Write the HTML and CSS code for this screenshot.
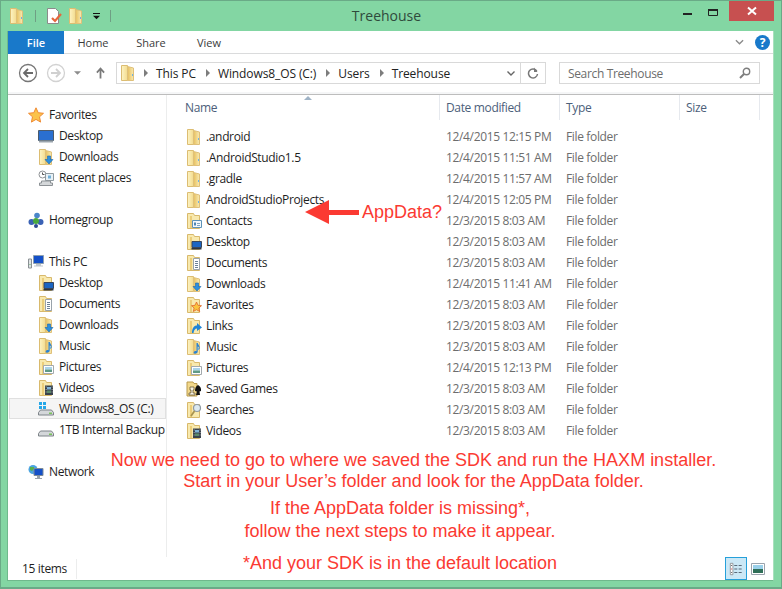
FILE: index.html
```html
<!DOCTYPE html>
<html lang="en">
<head>
    <meta charset="UTF-8">
    <title>Treehouse</title>
    <link rel="stylesheet" href="styles.css">
</head>
<body>
<svg class="defs" width="0" height="0">
    <defs>
        <linearGradient id="fback" x1="0" x2="1" y1="0" y2="0"><stop offset="0" stop-color="#fdf3c4"/><stop offset="1" stop-color="#f3dc8e"/></linearGradient>
        <linearGradient id="ffront" x1="0" x2="1" y1="0" y2="0"><stop offset="0" stop-color="#e6bf5e"/><stop offset="1" stop-color="#f9ebb4"/></linearGradient>
        <symbol id="folder" viewBox="0 0 16 16">
            <path d="M1.500.5h6v15h-6z" fill="url(#fback)" stroke="#dcbd72"/>
            <path d="M7.500 1.500l6 1.500v12.500h-6z" fill="url(#ffront)" stroke="#dfc07a"/>
            <path d="M12 9h1v2h-1z" fill="#6fb4e4"/>
        </symbol>
        <symbol id="folder2" viewBox="0 0 16 16">
            <path d="M1.500.5h6l1 2h5v13h-12z" fill="#f8e9ae" stroke="#d8b96c"/>
            <path d="M4 3h2v12H4z" fill="#ebcd7a"/>
        </symbol>
        <symbol id="contacts" viewBox="0 0 16 16">
            <use href="#folder2" width="16" height="16"/>
            <path d="M6.500 7.500h9v7h-9z" fill="#f2f7fb" stroke="#5d93b8"/>
            <path d="M8 9.500h2v3H8z" fill="#4d86b3"/><path d="M11 10h3v1h-3zM11 12h3v1h-3z" fill="#7fa5c0"/>
        </symbol>
        <symbol id="desktop" viewBox="0 0 16 16">
            <use href="#folder2" width="16" height="16"/>
            <path d="M6 7.500h9.500v6H6z" fill="#1b65c2" stroke="#39465a"/>
            <path d="M5.500 14h10v1.500h-10z" fill="#2d3540"/>
        </symbol>
        <symbol id="documents" viewBox="0 0 16 16">
            <use href="#folder2" width="16" height="16"/>
            <path d="M7.500 3.500h6v11h-6z" fill="#fff" stroke="#9aa3ab"/>
            <path d="M9 6h3v1H9zM9 8h3v1H9zM9 10h3v1H9zM9 12h3v1H9z" fill="#6d8296"/>
        </symbol>
        <symbol id="downloads" viewBox="0 0 16 16">
            <use href="#folder" width="16" height="16"/>
            <path d="M9.500 7h3v3.500H15L11 15 7 10.500h2.500z" fill="#2d8fdd" stroke="#1867ad" stroke-width=".6"/>
        </symbol>
        <symbol id="favorites" viewBox="0 0 16 16">
            <use href="#folder2" width="16" height="16"/>
            <path d="M10.500 5l1.500 3.300 3.500.4-2.600 2.300.8 3.500-3.200-1.800-3.200 1.800.8-3.500-2.600-2.300 3.500-.4z" fill="#f9c43f" stroke="#e0662c" stroke-width=".8"/>
        </symbol>
        <symbol id="links" viewBox="0 0 16 16">
            <use href="#folder2" width="16" height="16"/>
            <path d="M6 15c0-5 2-7.500 5-7.500V5l5 4.500-5 3.500v-2.500c-2 0-3 1.500-3.500 4.500z" fill="#1f85d6"/>
        </symbol>
        <symbol id="music" viewBox="0 0 16 16">
            <use href="#folder" width="16" height="16"/>
            <path d="M10.500 4h1.300c.3 2 2.700 3 1.700 6h-.5c.2-1.400-.5-2.300-1.300-2.600v5.100c0 1.400-1.300 2.200-2.600 2.200-1.500 0-2-1.600-.8-2.300.7-.4 1.500-.4 2.200-.2z" fill="#2b83d2"/>
        </symbol>
        <symbol id="pictures" viewBox="0 0 16 16">
            <use href="#folder2" width="16" height="16"/>
            <path d="M5.500 6.500h10v8h-10z" fill="#fff" stroke="#a3a9ad"/>
            <path d="M7 8h7v2.500H7z" fill="#a9d4ea"/><path d="M7 10.500h7V13H7z" fill="#5f9a86"/>
        </symbol>
        <symbol id="games" viewBox="0 0 16 16">
            <path d="M1 1h6l1 1.500h3V15H1z" fill="#f2d88b" stroke="#b99a4d"/>
            <path d="M4 6h4v3H7v3h2v2H3v-2h2V9H4z" fill="#f7f2df" stroke="#56492a" stroke-width=".7"/>
            <path d="M12 4c2 1 3.500 3 3 6l-1.500.5.500 3.500h-4l1-3.500-2-.5c0-3 1-5 3-6z" fill="#111"/>
        </symbol>
        <symbol id="searches" viewBox="0 0 16 16">
            <use href="#folder2" width="16" height="16"/>
            <circle cx="11" cy="6" r="3.500" fill="#dce9f0" stroke="#8f9aa2" stroke-width="1.200"/>
            <path d="M8.500 9L5 14" stroke="#a8934f" stroke-width="1.800"/>
        </symbol>
        <symbol id="videos" viewBox="0 0 16 16">
            <use href="#folder2" width="16" height="16"/>
            <path d="M7 5.500h8v9.500H7z" fill="#39424c"/>
            <path d="M9 7h4v2.500H9z" fill="#7fb2d6"/><path d="M9 10.500h4V13H9z" fill="#5b8a6a"/>
            <path d="M7.800 6.500h.6v1h-.6zM7.800 9h.6v1h-.6zM7.800 11.500h.6v1h-.6zM13.800 6.500h.6v1h-.6zM13.800 9h.6v1h-.6zM13.800 11.500h.6v1h-.6z" fill="#eee"/>
        </symbol>
        <symbol id="drive" viewBox="0 0 16 16">
            <path d="M2.500 9h11l2 2.500v2.500H.5v-2.500z" fill="#d4d7da" stroke="#7d8388"/>
            <path d="M11 11.500h3v1.500h-3z" fill="#79c35a"/>
        </symbol>
    </defs>
</svg>

<div class="window">
    <header class="titlebar">
        <div class="quick-access">
            <svg class="icon"><use href="#folder"/></svg>
            <span class="qa-sep"></span>
            <svg class="icon" viewBox="0 0 16 16"><path d="M1.500.5h8l3 3v12h-11z" fill="#fff" stroke="#8b8b8b"/><path d="M6 10l3 3 6-7" fill="none" stroke="#e5673c" stroke-width="2.200"/></svg>
            <svg class="icon"><use href="#folder"/></svg>
            <svg class="qa-more" viewBox="0 0 8 8"><path d="M0 0h8v1H0zM0 3h8L4 7z" fill="#111"/></svg>
            <span class="qa-sep"></span>
        </div>
        <div class="title">Treehouse</div>
        <div class="window-controls">
            <svg class="ctl" viewBox="0 0 27 21"><path d="M8 12h9v2H8z" fill="#222"/></svg>
            <svg class="ctl" viewBox="0 0 27 21"><path d="M6.500 8.500h9v6h-9z" fill="none" stroke="#222"/><path d="M6 8h10v2H6z" fill="#222"/></svg>
            <button class="close-btn"><svg viewBox="0 0 10 10"><path d="M1 1.500l8 7M9 1.500l-8 7" stroke="#fff" stroke-width="2"/></svg></button>
        </div>
    </header>

    <div class="pane">
        <nav class="ribbon">
            <a class="tab tab-file">File</a>
            <a class="tab">Home</a>
            <a class="tab">Share</a>
            <a class="tab">View</a>
            <svg class="ribbon-chevron" viewBox="0 0 10 6"><path d="M1 1l4 4 4-4" fill="none" stroke="#8a8a8a" stroke-width="1.500"/></svg>
            <span class="help">?</span>
        </nav>

        <div class="addressbar">
            <div class="nav-btns">
                <svg class="nav-round" viewBox="0 0 20 20"><circle cx="10" cy="10" r="8.500" fill="#fff" stroke="#767676" stroke-width="1.300"/><path d="M15 10H6M10 6l-4 4 4 4" fill="none" stroke="#6a6a6a" stroke-width="1.800"/></svg>
                <svg class="nav-round" viewBox="0 0 20 20"><circle cx="10" cy="10" r="8.500" fill="#fff" stroke="#d2d2d2" stroke-width="1.300"/><path d="M5 10h9M10 6l4 4-4 4" fill="none" stroke="#d0d0d0" stroke-width="1.800"/></svg>
                <svg class="nav-caret" viewBox="0 0 8 4"><path d="M0 0h8L4 4z" fill="#8c8c8c"/></svg>
                <svg class="nav-up" viewBox="0 0 10 12"><path d="M5 12V2M1 5.500L5 1l4 4.500" fill="none" stroke="#7a7a7a" stroke-width="2"/></svg>
            </div>
            <div class="crumbs">
                <svg class="icon crumb-icon"><use href="#folder"/></svg>
                <span class="crumb">This PC</span>
                <span class="crumb">Windows8_OS (C:)</span>
                <span class="crumb">Users</span>
                <span class="crumb">Treehouse</span>
                <span class="crumb-drop"><svg viewBox="0 0 8 5"><path d="M.5.500L4 4 7.500.5" fill="none" stroke="#666" stroke-width="1.400"/></svg></span>
                <span class="crumb-refresh"><svg viewBox="0 0 12 12"><path d="M9.800 4A4.500 4.500 0 1 0 10.500 7" fill="none" stroke="#777" stroke-width="1.500"/><path d="M7 .5V5h3.500z" fill="#777"/></svg></span>
            </div>
            <div class="searchbox">
                <span>Search Treehouse</span>
                <svg viewBox="0 0 12 12"><circle cx="7.500" cy="4.500" r="3.200" fill="none" stroke="#7d7d7d" stroke-width="1.400"/><path d="M5 7l-4 4" stroke="#7d7d7d" stroke-width="2"/></svg>
            </div>
        </div>
        <div class="strip"></div>

        <div class="main">
            <aside class="sidebar">
                <ul class="tree">
                    <li class="root"><svg class="icon" viewBox="0 0 16 16"><path d="M8 .8l2.200 4.900 5.300.6-4 3.500 1.100 5.300L8 12.400l-4.600 2.700 1.100-5.300-4-3.500 5.300-.6z" fill="#fbc34a" stroke="#ef8a33"/></svg>Favorites</li>
                    <li><svg class="icon" viewBox="0 0 16 16"><path d="M.5 2.500h15v10H.5z" fill="#2a6fd0" stroke="#4b5a6b"/><path d="M1 12.500h14v2H1z" fill="#9aa4ad"/></svg>Desktop</li>
                    <li><svg class="icon"><use href="#downloads"/></svg>Downloads</li>
                    <li><svg class="icon" viewBox="0 0 16 16"><circle cx="4.500" cy="4.500" r="3.500" fill="#fff" stroke="#8f9396"/><path d="M4.500 2.500v2h2" fill="none" stroke="#555"/><path d="M7.500 3.500h8v7h-8z" fill="#e8f1f6" stroke="#8f9aa0"/><path d="M10 5.500h3v3h-3z" fill="#73b0d8"/><path d="M3.500 11h9v2h2v2.500h-13V13h2z" fill="#d5d8da" stroke="#8d9296"/></svg>Recent places</li>
                    <li class="root gap"><svg class="icon" viewBox="0 0 16 16"><circle cx="3.500" cy="10" r="3" fill="#3a62b5"/><circle cx="12.500" cy="10" r="3" fill="#3a62b5"/><circle cx="9" cy="3.500" r="2.800" fill="#4a86c9"/><circle cx="8" cy="9" r="3" fill="#48a83e"/><circle cx="8" cy="14" r="2" fill="#2e4a94"/></svg>Homegroup</li>
                    <li class="root gap"><svg class="icon" viewBox="0 0 16 16"><path d="M5.500 1.500h10v8h-10z" fill="#1450c8" stroke="#8ea0b0"/><path d="M8 10h5v1.500h2v1H6v-1h2z" fill="#bfc6cc"/><path d="M.5 5h3v9h-3z" fill="#dfe3e5" stroke="#8a9094"/><path d="M1.500 10h1v1h-1z" fill="#5cb85c"/></svg>This PC</li>
                    <li><svg class="icon"><use href="#desktop"/></svg>Desktop</li>
                    <li><svg class="icon"><use href="#documents"/></svg>Documents</li>
                    <li><svg class="icon"><use href="#downloads"/></svg>Downloads</li>
                    <li><svg class="icon"><use href="#music"/></svg>Music</li>
                    <li><svg class="icon"><use href="#pictures"/></svg>Pictures</li>
                    <li><svg class="icon"><use href="#videos"/></svg>Videos</li>
                    <li class="selected"><svg class="icon" viewBox="0 0 16 16"><use href="#drive" width="16" height="16"/><path d="M1 1h3v3H1zM5 1h3v3H5zM1 5h3v3H1zM5 5h3v3H5z" fill="#25a7e8"/></svg>Windows8_OS (C:)</li>
                    <li><svg class="icon"><use href="#drive"/></svg>1TB Internal Backup</li>
                    <li class="root gap"><svg class="icon" viewBox="0 0 16 16"><circle cx="5" cy="5.500" r="4.500" fill="#4aa4e0"/><path d="M2 3h4v2l-2 2-2-1z" fill="#57b04a"/><path d="M6 4.500h9v7H6z" fill="#1450c8" stroke="#7d8b98"/><path d="M9 12h3v2h2v1H7v-1h2z" fill="#98a2aa"/></svg>Network</li>
                </ul>
            </aside>

            <section class="files">
                <div class="file-head">
                    <span class="col col-name">Name</span>
                    <span class="col">Date modified</span>
                    <span class="col">Type</span>
                    <span class="col col-size">Size</span>
                    <svg class="sort-caret" viewBox="0 0 8 4"><path d="M0 4l4-4 4 4z" fill="#9fb3c6"/></svg>
                </div>
                <div class="file-row"><span class="name"><svg class="icon"><use href="#folder"/></svg>.android</span><span class="meta">12/4/2015 12:15 PM</span><span class="meta">File folder</span></div>
                <div class="file-row"><span class="name"><svg class="icon"><use href="#folder"/></svg>.AndroidStudio1.5</span><span class="meta">12/4/2015 11:51 AM</span><span class="meta">File folder</span></div>
                <div class="file-row"><span class="name"><svg class="icon"><use href="#folder"/></svg>.gradle</span><span class="meta">12/4/2015 11:57 AM</span><span class="meta">File folder</span></div>
                <div class="file-row"><span class="name"><svg class="icon"><use href="#folder"/></svg>AndroidStudioProjects</span><span class="meta">12/4/2015 12:05 PM</span><span class="meta">File folder</span></div>
                <div class="file-row"><span class="name"><svg class="icon"><use href="#contacts"/></svg>Contacts</span><span class="meta">12/3/2015 8:03 AM</span><span class="meta">File folder</span></div>
                <div class="file-row"><span class="name"><svg class="icon"><use href="#desktop"/></svg>Desktop</span><span class="meta">12/3/2015 8:03 AM</span><span class="meta">File folder</span></div>
                <div class="file-row"><span class="name"><svg class="icon"><use href="#documents"/></svg>Documents</span><span class="meta">12/3/2015 8:03 AM</span><span class="meta">File folder</span></div>
                <div class="file-row"><span class="name"><svg class="icon"><use href="#downloads"/></svg>Downloads</span><span class="meta">12/4/2015 11:41 AM</span><span class="meta">File folder</span></div>
                <div class="file-row"><span class="name"><svg class="icon"><use href="#favorites"/></svg>Favorites</span><span class="meta">12/3/2015 8:03 AM</span><span class="meta">File folder</span></div>
                <div class="file-row"><span class="name"><svg class="icon"><use href="#links"/></svg>Links</span><span class="meta">12/3/2015 8:03 AM</span><span class="meta">File folder</span></div>
                <div class="file-row"><span class="name"><svg class="icon"><use href="#music"/></svg>Music</span><span class="meta">12/3/2015 8:03 AM</span><span class="meta">File folder</span></div>
                <div class="file-row"><span class="name"><svg class="icon"><use href="#pictures"/></svg>Pictures</span><span class="meta">12/4/2015 12:13 PM</span><span class="meta">File folder</span></div>
                <div class="file-row"><span class="name"><svg class="icon"><use href="#games"/></svg>Saved Games</span><span class="meta">12/3/2015 8:03 AM</span><span class="meta">File folder</span></div>
                <div class="file-row"><span class="name"><svg class="icon"><use href="#searches"/></svg>Searches</span><span class="meta">12/3/2015 8:03 AM</span><span class="meta">File folder</span></div>
                <div class="file-row"><span class="name"><svg class="icon"><use href="#videos"/></svg>Videos</span><span class="meta">12/3/2015 8:03 AM</span><span class="meta">File folder</span></div>
            </section>
        </div>

        <footer class="statusbar">
            <span class="count">15 items</span>
            <span class="view-btn active"><svg viewBox="0 0 16 16"><path d="M1.500 1.500h3v13h-3z" fill="#fff" stroke="#8b8f93"/><path d="M2.500 7.500h1v1h-1z" fill="#d33"/><path d="M2.500 3.500h1v1h-1zM2.500 11.500h1v1h-1z" fill="#555"/><path d="M6 3.500h3.500v1H6zM11 3.500h3.500v1H11zM6 7.500h3.500v1H6zM11 7.500h3.500v1H11zM6 11.500h3.500v1H6zM11 11.500h3.500v1H11z" fill="#5a6b7a"/></svg></span>
            <span class="view-btn"><svg viewBox="0 0 14 12"><path d="M.5.500h13v11H.5z" fill="#fff" stroke="#9aa3ad"/><path d="M2 2h10v4H2z" fill="#9ad0ea"/><path d="M2 6h10v4H2z" fill="#2f6f58"/></svg></span>
        </footer>
    </div>

    <div class="note-arrow">
        <svg viewBox="0 0 54 26"><path d="M0 13L24 1v10h30v5H24v9z" fill="#fb3a32"/></svg>
        <span>AppData?</span>
    </div>
    <div class="note">
        <p>Now we need to go to where we saved the SDK and run the HAXM installer.<br>Start in your User’s folder and look for the AppData folder.</p>
        <p class="note-mid">If the AppData folder is missing*,<br>follow the next steps to make it appear.</p>
        <p class="note-last">*And your SDK is in the default location</p>
    </div>
</div>
</body>
</html>
```

FILE: styles.css
```css
* {
    box-sizing: border-box;
}

body {
    margin: 0;
    font-family: "Open Sans", "Noto Sans", sans-serif;
    font-size: 12px;
    letter-spacing: -.35px;
    color: #1e1e1e;
}

.defs {
    position: absolute;
}

.icon {
    width: 16px;
    height: 16px;
    flex: none;
}

.window {
    position: relative;
    width: 782px;
    height: 589px;
    display: flex;
    flex-direction: column;
    background-color: #83d6a3;
    border: 1px solid #6aaa87;
    border-bottom-width: 2px;
}

/* title bar */
.titlebar {
    height: 30px;
    flex: none;
    display: grid;
    grid-template-columns: 1fr auto 1fr;
    padding-right: 7px;
}

.quick-access {
    display: flex;
    align-items: center;
    height: 30px;
    padding-left: 8px;
}

.qa-sep {
    width: 1px;
    height: 12px;
    margin: 0 10px;
    background-color: #6f9f84;
}

.quick-access .icon + .icon {
    margin-left: 6px;
}

.qa-more {
    width: 7px;
    height: 7px;
    margin-left: 9px;
}

.title {
    font-size: 14px;
    letter-spacing: 0;
    line-height: 30px;
    color: #2f4a3c;
    margin-right: 2px;
}

.window-controls {
    display: flex;
    justify-content: flex-end;
    align-items: flex-start;
}

.ctl {
    width: 27px;
    height: 21px;
}

.close-btn {
    width: 45px;
    height: 20px;
    padding: 0;
    border: none;
    background-color: #c75050;
    display: flex;
    align-items: center;
    justify-content: center;
}

.close-btn svg {
    width: 10px;
    height: 10px;
}

/* white pane */
.pane {
    flex: 1;
    margin: 0 7px 6px 6px;
    background-color: #fff;
    border: 1px solid #6fb98c;
    border-top: none;
    border-right-color: #a9e0bd;
    display: flex;
    flex-direction: column;
}

.ribbon {
    height: 23px;
    flex: none;
    display: flex;
    align-items: center;
    border-bottom: 1px solid #dadbdc;
}

.tab {
    width: 58px;
    text-align: center;
    color: #3b3b3b;
    font-size: 11px;
    letter-spacing: 0;
}

.tab-file {
    width: 56px;
    height: 23px;
    line-height: 23px;
    background-color: #1979ca;
    color: #fff;
    font-weight: 600;
}

.ribbon-chevron {
    width: 9px;
    height: 6px;
    margin-left: auto;
    margin-right: 11px;
}

.help {
    width: 15px;
    height: 15px;
    margin-right: 3px;
    border-radius: 50%;
    background-color: #1979ca;
    color: #fff;
    font-size: 12px;
    font-weight: 700;
    line-height: 15px;
    text-align: center;
}

/* address row */
.addressbar {
    height: 38px;
    flex: none;
    display: flex;
    align-items: center;
    padding-left: 10px;
}

.nav-btns {
    width: 98px;
    flex: none;
    display: flex;
    align-items: center;
}

.nav-round {
    width: 20px;
    height: 20px;
    margin-right: 8px;
}

.nav-caret {
    width: 7px;
    height: 4px;
}

.nav-up {
    width: 9px;
    height: 12px;
    margin-left: 15px;
}

.crumbs {
    width: 430px;
    height: 22px;
    flex: none;
    display: flex;
    align-items: center;
    border: 1px solid #d9d9d9;
    padding-left: 3px;
    color: #222;
    letter-spacing: -.1px;
}

.crumb-icon {
    margin-right: 8px;
}

.crumb {
    display: flex;
    align-items: center;
    margin-right: 10px;
}

.crumb::before {
    content: "";
    margin-right: 8px;
    border-left: 4px solid #7d7d7d;
    border-top: 4px solid transparent;
    border-bottom: 4px solid transparent;
}

.crumb-drop {
    margin-left: auto;
    width: 18px;
    text-align: center;
    line-height: 0;
}

.crumb-drop svg {
    width: 8px;
    height: 5px;
}

.crumb-refresh {
    width: 25px;
    height: 20px;
    border-left: 1px solid #d9d9d9;
    display: flex;
    align-items: center;
    justify-content: center;
}

.crumb-refresh svg {
    width: 12px;
    height: 12px;
}

.searchbox {
    width: 201px;
    height: 22px;
    flex: none;
    margin-left: 13px;
    padding: 0 8px;
    display: flex;
    align-items: center;
    justify-content: space-between;
    border: 1px solid #d9d9d9;
    color: #6d6d6d;
}

.searchbox svg {
    width: 12px;
    height: 12px;
}

.strip {
    height: 3px;
    flex: none;
    background-color: #f5f6f7;
    border-bottom: 1px solid #bdbdbd;
}

/* sidebar and list */
.main {
    flex: 1;
    display: flex;
    min-height: 0;
}

.sidebar {
    width: 159px;
    flex: none;
    padding-top: 9px;
    border-right: 1px solid #eceded;
}

.tree {
    list-style: none;
    margin: 0;
    padding: 0;
}

.tree li {
    height: 21px;
    display: flex;
    align-items: center;
    gap: 5px;
    padding-left: 30px;
    white-space: nowrap;
}

.tree li.root {
    padding-left: 20px;
}

.tree li.gap {
    margin-top: 21px;
}

.tree li.selected {
    margin-left: 1px;
    padding-left: 28px;
    background-color: #f5f5f5;
    border: 1px solid #e0e0e0;
}

.files {
    flex: 1;
}

.file-head {
    position: relative;
    height: 31px;
    display: grid;
    grid-template-columns: 273px 120px 120px 80px;
    color: #4c607a;
}

.col {
    height: 25px;
    padding: 4px 0 0 6px;
    border-right: 1px solid #e6e9ee;
}

.col-name {
    padding-left: 18px;
}

.sort-caret {
    position: absolute;
    left: 137px;
    top: 1px;
    width: 8px;
    height: 4px;
}

.file-row {
    height: 21px;
    display: grid;
    grid-template-columns: 273px 120px 120px;
    align-items: center;
}

.name {
    display: flex;
    align-items: center;
    gap: 4px;
    padding-left: 19px;
}

.meta {
    padding-left: 6px;
    color: #6d6d6d;
}

/* status bar */
.statusbar {
    height: 23px;
    flex: none;
    display: flex;
    align-items: center;
    padding-left: 14px;
    padding-right: 4px;
}

.count {
    width: 55px;
    height: 20px;
    line-height: 20px;
    border-right: 1px solid #eceded;
    margin-right: auto;
}

.view-btn {
    width: 22px;
    height: 23px;
    display: flex;
    align-items: center;
    justify-content: center;
}

.view-btn svg {
    width: 14px;
    height: 14px;
}

.view-btn.active {
    background-color: #cbe8f6;
    border: 1px solid #26a0da;
}

/* red annotations over the screenshot */
.note-arrow {
    position: absolute;
    left: 304px;
    top: 198px;
    display: flex;
    align-items: center;
    gap: 3px;
    font-family: "Liberation Sans", Arial, sans-serif;
    font-size: 18px;
    letter-spacing: 0;
    color: #fb3a32;
}

.note-arrow svg {
    width: 54px;
    height: 26px;
}

.note {
    position: absolute;
    left: 100px;
    top: 449px;
    width: 625px;
    text-align: center;
    font-family: "Liberation Sans", Arial, sans-serif;
    font-size: 18px;
    letter-spacing: 0;
    line-height: 21px;
    color: #fb3a32;
}

.note p {
    margin: 0;
}

.note .note-mid {
    margin-top: 5px;
    padding-right: 27px;
    line-height: 23px;
}

.note .note-last {
    margin-top: 10px;
    padding-right: 27px;
}
```
